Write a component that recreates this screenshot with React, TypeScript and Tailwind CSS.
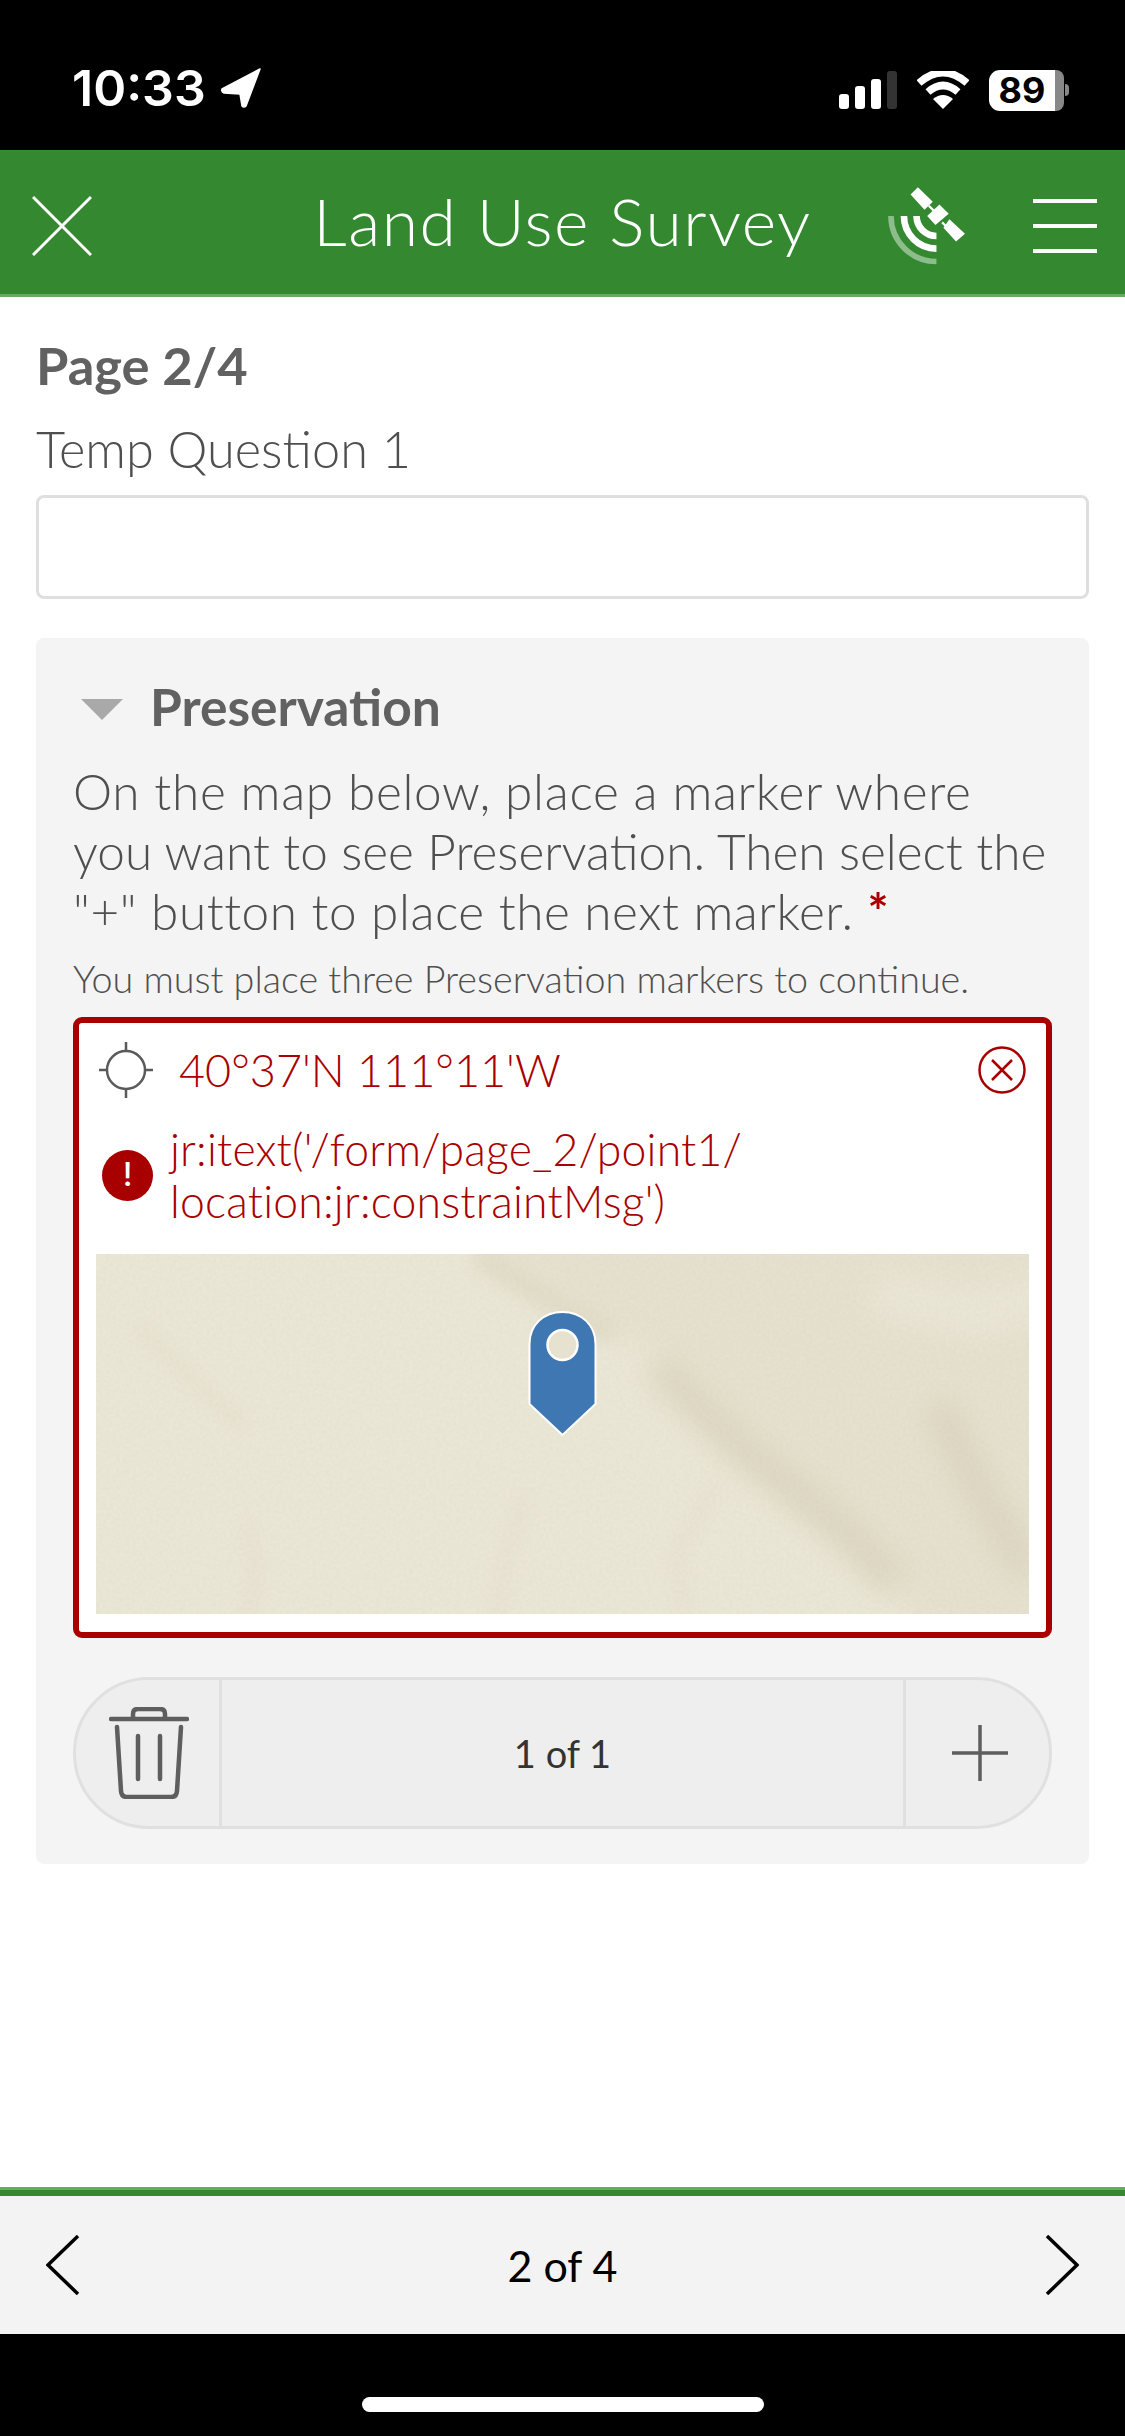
import { Fragment } from "react";

const FONT = "font-['Lato','Noto_Sans',sans-serif]";

function StatusBar() {
  return (
    <div className="h-[150px] bg-black flex items-start justify-between shrink-0 pl-[72px] pr-[56px] pt-[60px]">
      <div className="flex items-center gap-[15px] h-[56px]">
        <span className="font-['Inter',sans-serif] font-semibold text-[50px] leading-none text-white">10:33</span>
        <svg width="40" height="40" viewBox="0 0 40 40"><path d="M39 1 L1 21 Q0 24 3 25 L19 26 L21 38 Q23 40 25 38 Z" fill="#fff" stroke="#fff" strokeWidth="1.500" strokeLinejoin="round" /></svg>
      </div>
      <div className="flex items-center gap-[20px] h-[56px] pt-[4px]">
        <svg width="58" height="38" viewBox="0 0 58 38">
          <rect x="0" y="23" width="10" height="15" rx="3" fill="#fff" />
          <rect x="16" y="15" width="10" height="23" rx="3" fill="#fff" />
          <rect x="32" y="8" width="10" height="30" rx="3" fill="#fff" />
          <rect x="48" y="0" width="10" height="38" rx="3" fill="#333" />
        </svg>
        <svg width="52" height="38" viewBox="0 0 52 38">
          <path d="M2 12 Q26 -9 50 12" fill="none" stroke="#fff" strokeWidth="7.500" />
          <path d="M11 21 Q26 8 41 21" fill="none" stroke="#fff" strokeWidth="7.500" />
          <path d="M16 28 Q26 20 36 28 L26 38 Z" fill="#fff" />
        </svg>
        <div className="flex items-center">
          <div className="w-[66px] h-[41px] rounded-l-[11px] bg-white flex items-center justify-center">
            <span className="font-['Inter',sans-serif] font-bold text-[36px] leading-none text-black">89</span>
          </div>
          <div className="w-[9px] h-[41px] rounded-r-[8px] bg-[#888]" />
          <div className="w-[4px] h-[12px] ml-[1px] rounded-r-full bg-[#888]" />
        </div>
      </div>
    </div>
  );
}

function Header() {
  return (
    <div className="h-[147px] shrink-0 bg-[#338830] border-b-[3px] border-[#6aa866] flex items-center relative">
      <div className="w-full flex items-center justify-between pl-[32px] pr-[28px] mt-[8px]">
        <svg width="60" height="60" viewBox="0 0 60 60" fill="none" stroke="#fff" strokeWidth="3">
          <path d="M1 1 L59 59 M59 1 L1 59" />
        </svg>
        <div className="flex items-center gap-[67px]">
          <svg width="78" height="80" viewBox="115 405 235 240">
            <g fill="#fff">
              <path d="M205 408 L250 452 L225 476 L183 430 Z" />
              <path d="M270 460 L298 488 L258 522 L233 495 Z" />
              <path d="M300 505 L347 548 L320 572 L282 530 Z" />
            </g>
            <path d="M238 464 L252 478 M278 514 L292 528" stroke="#fff" strokeWidth="7" />
            <g fill="none" stroke="#fff" strokeWidth="20">
              <path d="M201 495 A60 60 0 0 0 261 555" />
              <path d="M163 495 A98 98 0 0 0 261 593" />
            </g>
            <path d="M124 495 A137 137 0 0 0 261 632" fill="none" stroke="#8dbd8b" strokeWidth="17" />
          </svg>
          <div className="w-[64px] flex flex-col gap-[21px]">
            <div className="h-[4px] bg-white" />
            <div className="h-[4px] bg-white" />
            <div className="h-[4px] bg-white" />
          </div>
        </div>
      </div>
      <div className="absolute inset-0 flex items-center justify-center pointer-events-none">
        <span className="font-light text-[66px] leading-none text-white tracking-[1.5px] -mt-[3px]">Land Use Survey</span>
      </div>
    </div>
  );
}

function MapPreview() {
  return (
    <div className="h-[360px] mx-[17px] mt-[27px] relative overflow-hidden bg-[#ebe7d6]">
      <svg className="w-full h-full" width="932" height="360" viewBox="0 0 932 360">
        <defs>
          <filter id="b1" filterUnits="userSpaceOnUse" x="-100" y="-100" width="1132" height="560"><feGaussianBlur stdDeviation="14" /></filter>
          <filter id="b2" filterUnits="userSpaceOnUse" x="-100" y="-100" width="1132" height="560"><feGaussianBlur stdDeviation="9" /></filter>
          <filter id="grain">
            <feTurbulence type="fractalNoise" baseFrequency="0.3" numOctaves="3" seed="4" />
            <feColorMatrix values="0 0 0 0 0.55  0 0 0 0 0.5  0 0 0 0 0.38  0.55 0 0 0 -0.15" />
          </filter>
        </defs>
        <rect width="932" height="360" fill="#ebe7d6" />
        <path d="M370 -20 L470 50 L590 120 L650 190 L760 290 L830 380 L960 380 L960 -20 Z" fill="#e6e1cf" filter="url(#b1)" />
        <path d="M560 110 L640 190 L740 270 L800 330" stroke="#dcd6c1" strokeWidth="34" fill="none" filter="url(#b1)" />
        <path d="M380 0 L460 50 L520 80" stroke="#e1dbc8" strokeWidth="24" fill="none" filter="url(#b2)" />
        <path d="M840 150 L880 230 L932 320" stroke="#dcd6c1" strokeWidth="34" fill="none" filter="url(#b1)" />
        <path d="M780 40 L880 60 L960 40" stroke="#ebe7d7" strokeWidth="40" fill="none" filter="url(#b1)" />
        <path d="M40 70 L100 130 L150 175" stroke="#e6e1cf" strokeWidth="14" fill="none" filter="url(#b2)" />
        <path d="M150 270 L160 320 L150 370" stroke="#e6e1cf" strokeWidth="12" fill="none" filter="url(#b2)" />
        <path d="M430 240 L410 300 L400 370" stroke="#e6e1d0" strokeWidth="12" fill="none" filter="url(#b2)" />
        <path d="M620 230 L580 300 L590 370" stroke="#e6e1d0" strokeWidth="12" fill="none" filter="url(#b2)" />
        <rect width="932" height="360" filter="url(#grain)" opacity="0.35" />
        <g transform="translate(433 57)">
          <path d="M33 1 C14 1 0 14 0 33 L0 93 L33 124 L66 93 L66 33 C66 14 52 1 33 1 Z" fill="#3f77b3" stroke="#fff" strokeWidth="2" strokeLinejoin="round" />
          <circle cx="33" cy="34" r="15" fill="#e7e2d0" stroke="#fff" strokeWidth="2.500" />
        </g>
      </svg>
    </div>
  );
}

function GeopointCard() {
  return (
    <div className="mt-[13px] h-[621px] rounded-[9px] border-[6px] border-[#a80000] bg-white text-[#a80000]">
      <div className="flex items-center justify-between h-[94px] pl-[20px] pr-[20px]">
        <div className="flex items-center gap-[26px]">
          <svg width="54" height="56" viewBox="0 0 54 56" fill="none" stroke="#5a5a5a" strokeWidth="2.500">
            <circle cx="27" cy="28" r="19" />
            <path d="M27 0 V9 M27 47 V56 M0 28 H8 M46 28 H54" />
          </svg>
          <span className="text-[45px] leading-none font-light">40°37'N 111°11'W</span>
        </div>
        <svg width="48" height="48" viewBox="0 0 48 48" fill="none" stroke="#a80000" strokeWidth="2.500">
          <circle cx="24" cy="24" r="22.5" />
          <path d="M14 14 L34 34 M34 14 L14 34" />
        </svg>
      </div>
      <div className="flex items-center gap-[17px] pl-[23px] mt-[6px]">
        <div className="w-[51px] h-[51px] rounded-full bg-[#a80000] flex items-center justify-center shrink-0">
          <span className="font-['Inter',sans-serif] text-white text-[32px] leading-none font-medium">!</span>
        </div>
        <p className="text-[44.500px] leading-[52px] font-light tracking-[0.2px]">
          jr:itext('/form/page_2/point1/
          <br />
          location:jr:constraintMsg')
        </p>
      </div>
      <MapPreview />
    </div>
  );
}

function RepeatStepper() {
  return (
    <div className="mt-[39px] h-[152px] rounded-full border-[3px] border-[#e0e0e0] bg-[#eeeeee] flex items-stretch">
      <div className="w-[146px] border-r-[3px] border-[#e0e0e0] flex items-center justify-end pr-[30px] shrink-0">
        <svg width="80" height="92" viewBox="0 0 80 92" fill="none" stroke="#5e5e5e" strokeWidth="4.500" strokeLinecap="round" strokeLinejoin="round">
          <path d="M2 12 H78" />
          <path d="M24 11 V7 Q24 2 29 2 H51 Q56 2 56 7 V11" />
          <path d="M8 20 L12 84 Q12.500 90 18 90 H62 Q67.500 90 68 84 L72 20" />
          <path d="M29 29 V72 M51 29 V72" />
        </svg>
      </div>
      <div className="flex-1 flex items-center justify-center text-[38px] text-[#333]">1 of 1</div>
      <div className="w-[146px] border-l-[3px] border-[#e0e0e0] flex items-center shrink-0 pl-[44px]">
        <svg width="60" height="60" viewBox="0 0 60 60" stroke="#5e5e5e" strokeWidth="3.500">
          <path d="M30 2 V58 M2 30 H58" />
        </svg>
      </div>
    </div>
  );
}

function Footer() {
  return (
    <Fragment>
      <div className="h-[147px] shrink-0 bg-[#f3f3f3] flex items-center justify-between px-[46px] border-t-[9px] border-[#338830] relative">
        <div className="absolute inset-x-0 -top-[9px] h-[3px] bg-[#6aa866]" />
        <svg width="34" height="60" viewBox="0 0 34 60" fill="none" stroke="#000" strokeWidth="3.500"><path d="M32 1 L2 30 L32 59" /></svg>
        <span className="text-[43px] leading-none text-black">2 of 4</span>
        <svg width="34" height="60" viewBox="0 0 34 60" fill="none" stroke="#000" strokeWidth="3.500"><path d="M2 1 L32 30 L2 59" /></svg>
      </div>
      <div className="flex-1 bg-black flex justify-center pt-[63px]">
        <div className="w-[402px] h-[15px] rounded-full bg-white" />
      </div>
    </Fragment>
  );
}

export default function App() {
  return (
    <div className={`${FONT} w-[1125px] h-[2436px] flex flex-col bg-white overflow-hidden`}>
      <StatusBar />
      <Header />
      <main className="h-[1890px] shrink-0 px-[36px] pt-[39px]">
        <h1 className="text-[52.500px] leading-[58px] font-bold text-[#616161]">Page 2/4</h1>
        <p className="mt-[27px] text-[50.500px] leading-[56px] font-light text-[#4f4f4f]">Temp Question 1</p>
        <div className="mt-[18px] h-[104px] rounded-[8px] border-[3px] border-[#dfdfdf] bg-white" />
        <section className="mt-[39px] h-[1226px] rounded-[8px] bg-[#f4f4f4] px-[37px] pt-[37px]">
          <div className="flex items-center h-[64px]">
            <div className="w-0 h-0 ml-[8px] border-x-[21px] border-x-transparent border-t-[21px] border-t-[#a9a9a9] mt-[4px]" />
            <h2 className="ml-[27px] text-[51.500px] leading-none font-bold text-[#616161]">Preservation</h2>
          </div>
          <p className="mt-[22px] text-[49.500px] leading-[60px] font-light text-[#4f4f4f]">
            <span className="block tracking-[0.7px]">On the map below, place a marker where</span>
            <span className="block">you want to see Preservation. Then select the</span>
            <span className="block tracking-[0.55px]">
              "+" button to place the next marker. <span className="text-[#a80000] font-bold">*</span>
            </span>
          </p>
          <p className="mt-[13px] text-[37.700px] leading-[50px] text-[#4f4f4f] font-light">You must place three Preservation markers to continue.</p>
          <GeopointCard />
          <RepeatStepper />
        </section>
      </main>
      <Footer />
    </div>
  );
}
